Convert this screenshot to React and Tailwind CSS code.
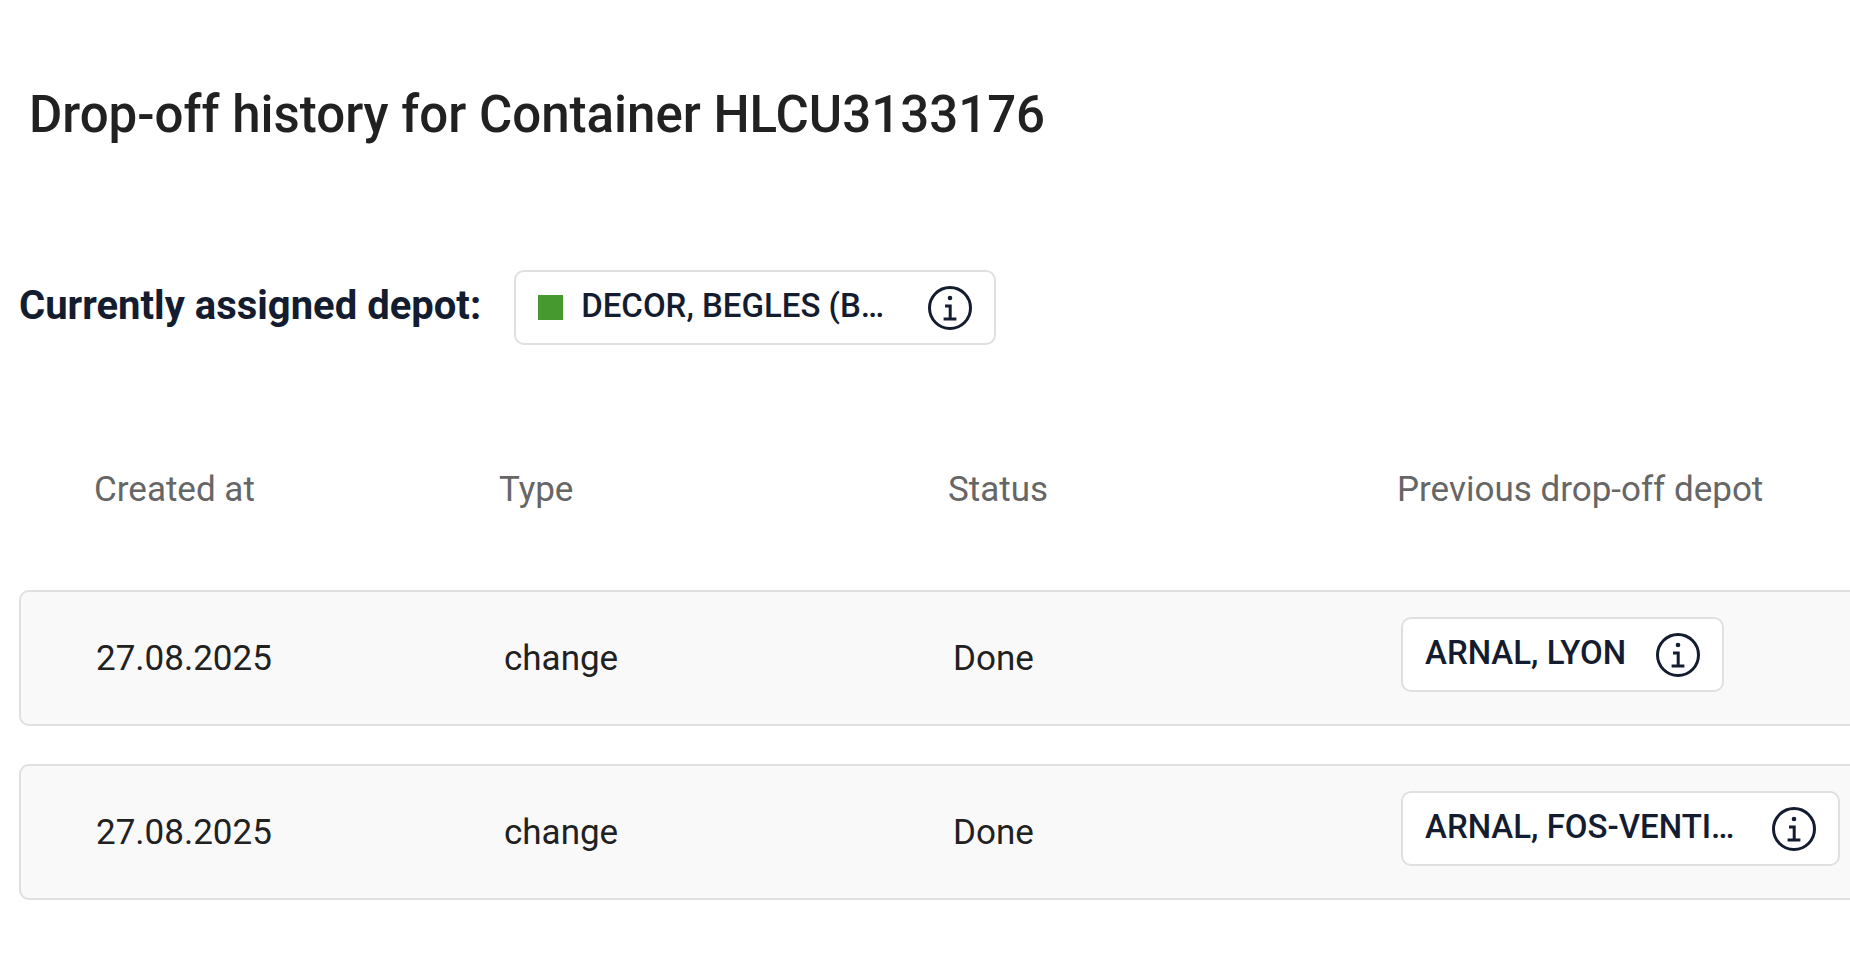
import React from 'react'

const historyEntries = [
    { id: 1, createdAt: "27.08.2025", type: "change", status: "Done", depot: "ARNAL, LYON" },
    { id: 2, createdAt: "27.08.2025", type: "change", status: "Done", depot: "ARNAL, FOS-VENTI…", wide: true },
]

const InfoIcon = () => {
    return (
        <svg viewBox="0 0 44 44" className="size-11 shrink-0" fill="none" stroke="currentColor" aria-hidden="true">
            <circle cx="22" cy="22" r="20.5" strokeWidth="3" />
            <circle cx="22" cy="12" r="2.3" fill="currentColor" stroke="none" />
            <path d="M17 20H22.2V33M15.6 33H28.4" strokeWidth="3" />
        </svg>
    )
}

/*
Depot button
Shows the depot name, an optional color marker and the info icon
*/
const DepotButton = ({ name, marker, wide }) => {
    return (
        <button type="button" className="inline-flex h-[75px] items-center rounded-[10px] border-2 border-[#e0e0e0] bg-white px-[22px] text-[33px] leading-[40px] font-medium text-[#141c30]">
            {marker && <span className="mr-[18px] size-[25px] shrink-0 bg-[#46992f]" />}
            <span className={wide ? "w-[323px] truncate pb-1 text-left" : "min-w-[207px] truncate pb-1 text-left"}>{name}</span>
            <span className="ml-6"><InfoIcon /></span>
        </button>
    )
}

const HistoryTable = () => {
    return (
        <table className="w-full table-fixed border-separate border-spacing-x-0 border-spacing-y-[38px] text-left text-[35px] leading-[50px]">
            <colgroup>
                <col className="w-[449px]" />
                <col className="w-[449px]" />
                <col className="w-[449px]" />
                <col />
            </colgroup>
            <thead className="text-[#666666]">
                <tr className="h-[113px] align-top">
                    <th className="pt-[26px] pl-[75px] font-normal">Created at</th>
                    <th className="pt-[26px] pl-[31px] font-normal">Type</th>
                    <th className="pt-[26px] pl-[31px] font-normal">Status</th>
                    <th className="pt-[26px] pl-[31px] font-normal">Previous drop-off depot</th>
                </tr>
            </thead>
            <tbody className="text-[#212121]">
                {historyEntries.map((entry) => (
                    <tr key={entry.id} className="h-[136px] bg-[#f9f9f9]">
                        <td className="rounded-l-[10px] border-2 border-r-0 border-[#e0e0e0] pt-0.5 pl-[75px]">{entry.createdAt}</td>
                        <td className="border-y-2 border-[#e0e0e0] pt-0.5 pl-9">{entry.type}</td>
                        <td className="border-y-2 border-[#e0e0e0] pt-0.5 pl-9">{entry.status}</td>
                        <td className="border-y-2 border-[#e0e0e0] pt-[25px] pl-[35px] align-top">
                            <DepotButton name={entry.depot} wide={entry.wide} />
                        </td>
                    </tr>
                ))}
            </tbody>
        </table>
    )
}

const App = () => {
    return (
        <main className="min-h-screen bg-white pt-[85px] pl-[19px] font-['Roboto',sans-serif]">
            <h1 className="pl-[10px] text-[51px] leading-[60px] font-medium text-[#212121]">Drop-off history for Container HLCU3133176</h1>
            <section className="mt-[125px] mb-[56px] flex items-center gap-[33px]">
                <h2 className="pb-1 text-[40px] leading-[50px] font-bold text-[#141c30]">Currently assigned depot:</h2>
                <DepotButton name="DECOR, BEGLES (B…" marker wide />
            </section>
            <HistoryTable />
        </main>
    )
}

export default App
